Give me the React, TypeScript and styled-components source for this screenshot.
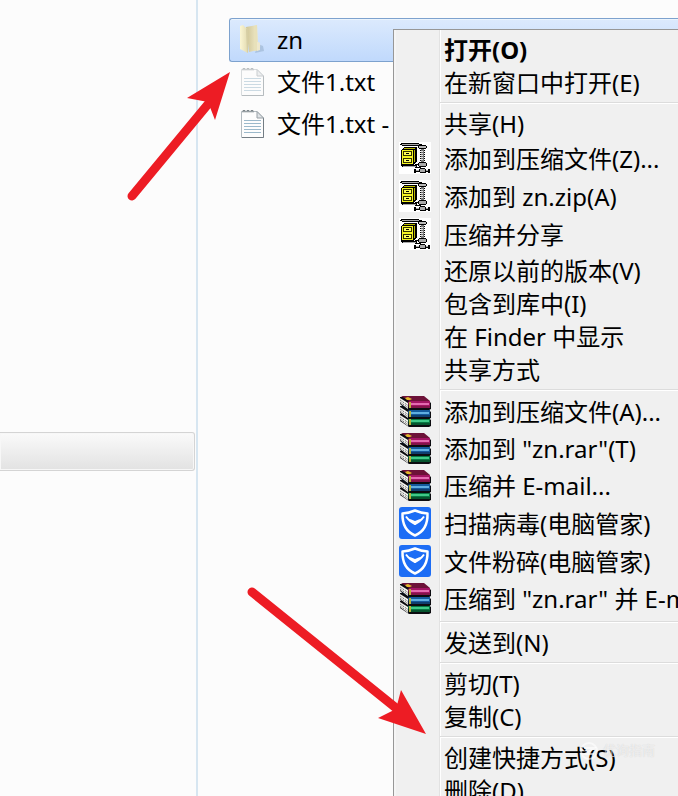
import React from 'react';
import styled, { createGlobalStyle, css } from 'styled-components';

const GlobalStyle = createGlobalStyle`
  * { box-sizing: border-box; }
  html, body { margin: 0; background: #fcfcfc; }
  body, button {
    font-family: "Noto Sans", "Noto Sans CJK SC", sans-serif;
    font-size: 24px;
    line-height: 33px;
    color: #000;
  }
`;

const Explorer = styled.div`
  position: relative;
  display: flex;
  height: 100vh;
  min-height: 480px;
  overflow: hidden;
`;

const Sidebar = styled.nav`
  flex: 0 0 198px;
  display: flex;
  flex-direction: column;
  padding: 432px 1px 0 0;
  border-right: 2px solid #d7e6f1;
`;

const SidebarItem = styled.button`
  height: 39px;
  border: 1px solid #d4d4d4;
  border-left: 0;
  border-radius: 0 3px 3px 0;
  background: linear-gradient(#fafafa, #e2e2e2);
  box-shadow: inset 0 0 0 1px #f7f7f7;
`;

const FileList = styled.ul`
  flex: 1;
  min-width: 0;
  margin: 0;
  padding: 18px 0 0 31px;
  list-style: none;
`;

const FileRow = styled.li<{ $selected?: boolean }>`
  display: flex;
  align-items: center;
  gap: 8px;
  height: 42px;
  padding: 0 0 4px 8px;
  white-space: nowrap;
  border: 1px solid transparent;
  border-right: 0;
  ${p => p.$selected && css`
    height: 44px;
    padding-bottom: 2px;
    border-color: #7da2ce;
    border-radius: 3px 0 0 3px;
    background: linear-gradient(#dceafd, #c0d9fc);
    box-shadow: inset 0 1px 0 #ebf4fd;
  `}
`;

const FileIcon = styled.svg`
  flex: none;
  width: 31px;
  height: 32px;
`;

const Menu = styled.div`
  position: absolute;
  top: 29px;
  left: 393px;
  right: -60px;
  padding: 3px 0;
  border: 1px solid #979797;
  background: linear-gradient(90deg, #f5f5f5 2px, #f0f0f0 2px 45px, #e2e2e2 45px 46px, #fff 46px 47px, #f0f0f0 47px);
`;

const MenuItem = styled.button<{ $size: number; $bold?: boolean }>`
  display: grid;
  grid-template-columns: 32px 1fr;
  column-gap: 13px;
  align-items: center;
  width: 100%;
  height: ${p => p.$size}px;
  padding: 0 0 2px 5px;
  border: 0;
  background: transparent;
  text-align: left;
  white-space: nowrap;
  font-weight: ${p => (p.$bold ? 700 : 400)};
`;

const Separator = styled.hr`
  height: 2px;
  margin: 3px 0 3px 46px;
  border: 0;
  border-top: 1px solid #dcdcdc;
  background: #fff;
`;

const MenuIcon = styled.svg`
  display: block;
  width: 32px;
  height: 32px;
`;

const Annotations = styled.svg`
  position: absolute;
  top: 0;
  left: 0;
  width: 678px;
  height: 796px;
  pointer-events: none;
`;

const Watermark = styled.div`
  position: absolute;
  top: 737px;
  left: 579px;
  display: flex;
  gap: 4px;
  align-items: center;
  font-size: 13px;
  line-height: 27px;
  color: rgba(255, 255, 255, 0.6);
  text-shadow: 0 0 1px rgba(120, 120, 120, 0.3);
  pointer-events: none;
`;

const Folder = () => (
  <FileIcon viewBox="0 0 31 32" aria-hidden="true">
    <defs>
      <linearGradient id="flap"><stop offset="0" stopColor="#fbf6d4" /><stop offset="1" stopColor="#e2dab0" /></linearGradient>
      <linearGradient id="back"><stop offset="0" stopColor="#cfc596" /><stop offset="1" stopColor="#f1ebca" /></linearGradient>
    </defs>
    <path d="M20 21l5 2 1 5-9 2z" fill="#9fb8d4" opacity=".7" />
    <path d="M8 4l11-2 1 25-9 2z" fill="url(#back)" />
    <path d="M16 3l3-1 1 25-3 1z" fill="#e8e1ba" />
    <path d="M2 3l3-1 4 4 1 24-8-4z" fill="url(#flap)" />
    <path d="M8 6l2-1v24l-1 1z" fill="#d6cea4" />
    <path d="M20 19c3 0 2 3 2 8l-3 1V19z" fill="#eee8cd" />
  </FileIcon>
);

const TextFile = ({ dim = false }: { dim?: boolean }) => (
  <FileIcon viewBox="1 0 31 32" opacity={dim ? 0.5 : 1} aria-hidden="true">
    <path d="M4.500 4.500H20L26.500 11V30.500H4.500z" fill="#fdfdfd" stroke="#b3bbc0" />
    <path d="M26.500 11V30.500H5" fill="none" stroke="#737d84" />
    <path d="M20 4.500V11h6.500z" fill="#dfe3e6" stroke="#98a0a6" />
    <path d="M7 13.500h17M7 16.500h17M7 19.500h17M7 22.500h17M7 25.500h17" stroke="#9bb9cb" />
    <path d="M6 5.500v-2h2v2M10 5.500v-2h2v2M14 5.500v-2h2v2" fill="none" stroke="#7c8589" />
  </FileIcon>
);

const ZipIcon = () => (
  <MenuIcon viewBox="0 0 32 32" shapeRendering="crispEdges" aria-hidden="true">
    <path d="M0 0h32v32H0z" fill="#fff" />
    <path d="M2 1h18v1h3v1h2v1H15V4H3V3H1V2h1z" fill="#000" />
    <path d="M3 2h17v1H3z" fill="#aaa" />
    <path d="M2 23h13l2-1h2v1h-1v2h4v1h-6v-1H3v-1H2z" fill="#000" />
    <path d="M4 24h13v1H4z" fill="#aaa" />
    <path d="M2 8l3-3h13v14l-3 4H2z" fill="#000" />
    <path d="M3 8h11v14H3z" fill="#f5f522" />
    <path d="M5 6h11v1H4zM15 8l1-1v12l-1 1z" fill="#b9b900" />
    <path d="M4 9h9v5H4zM4 16h9v5H4z" fill="#333300" />
    <path d="M5 10h7v3H5zM5 17h7v3H5z" fill="#ffff55" />
    <path d="M7 11h3v1H7zM7 18h3v1H7z" fill="#000" />
    <path d="M20 3h7v1h1v2h-1v1h-7V6h-1V4h1z" fill="#000" />
    <path d="M20 4h7v2h-7z" fill="#bbb" />
    <path d="M21 8h5v1h-5zM21 10h5v1h-5zM21 12h5v1h-5zM21 14h5v1h-5zM21 16h5v1h-5zM21 18h5v1h-5z" fill="#000" />
    <path d="M22 7h3v13h-3z" fill="#777" />
    <path d="M22 9h2v1h-2zM22 11h2v1h-2zM22 13h2v1h-2zM22 15h2v1h-2zM22 17h2v1h-2z" fill="#ddd" />
    <path d="M20 20h7v1h1v3h-1v1h-7v-1h-1v-3h1z" fill="#000" />
    <path d="M20 21h7v3h-7z" fill="#aaa" />
    <path d="M15 27h2v1h3v-1h1v-1h5v1h1v1h2v-1h2v4h-2v-1h-2v1h-6v-1h-4v1h-2z" fill="#000" />
    <path d="M21 27h5v3h-5zM17 28h3v1h-3zM27 28h2v1h-2z" fill="#aaa" />
  </MenuIcon>
);

const books = [
  { y: 0, cover: '#6d1238', spine: '#a31563', light: '#e46bb0' },
  { y: 9, cover: '#0b2c50', spine: '#145a9c', light: '#5faee0' },
  { y: 17, cover: '#053a22', spine: '#077a43', light: '#40c988' },
];

const RarIcon = () => (
  <MenuIcon viewBox="0 0 32 32" aria-hidden="true">
    {[...books].reverse().map(b => (
      <g key={b.y} transform={`translate(0 ${b.y})`}>
        <path d="M1 1H25L32 7V13L30 14H10L1 8z" fill="#0c0c10" />
        <path d="M1 2L9 7V13L1 7z" fill="#f4f4f0" />
        <path d="M1 4L9 9.500M1 6L9 11.500" stroke="#777" strokeDasharray="2 1" />
        <path d="M2 0H25L31 5H10z" fill={b.cover} />
        <path d="M9 6Q10 5 12 5H31V12H10z" fill={b.spine} />
        <path d="M12 7H30V9H12z" fill={b.light} />
        <path d="M12 10H31V12H11z" fill={b.cover} opacity=".6" />
        <path d="M10 6h2v6h-2z" fill="#b9b23c" />
      </g>
    ))}
    <path d="M6 2l3-1 4 2-2 1h-3z" fill="#e3b72c" />
  </MenuIcon>
);

const ShieldIcon = () => (
  <MenuIcon viewBox="0 0 32 32" aria-hidden="true">
    <rect width="32" height="32" rx="3" fill="#1d6df5" />
    <path d="M3.500 6.500Q10 6 16 3.500Q22 6 28.500 6.500Q29 23 16 28.500Q3 23 3.500 6.500z" fill="none" stroke="#fff" strokeWidth="2.500" strokeLinejoin="round" />
    <path d="M7 9.500Q11 15 16 17Q21 15 25 9.500" fill="none" stroke="#fff" strokeWidth="2" />
    <path d="M9 11.500Q12 12 16 14Q20 12 23 11.500L16 18z" fill="#fff" />
  </MenuIcon>
);

const icons = { zip: ZipIcon, rar: RarIcon, shield: ShieldIcon };

type Entry = { label: string; icon?: keyof typeof icons; bold?: boolean };

const groups: Entry[][] = [
  [{ label: '打开(O)', bold: true }, { label: '在新窗口中打开(E)' }],
  [
    { label: '共享(H)' },
    { label: '添加到压缩文件(Z)...', icon: 'zip' },
    { label: '添加到 zn.zip(A)', icon: 'zip' },
    { label: '压缩并分享', icon: 'zip' },
    { label: '还原以前的版本(V)' },
    { label: '包含到库中(I)' },
    { label: '在 Finder 中显示' },
    { label: '共享方式' },
  ],
  [
    { label: '添加到压缩文件(A)...', icon: 'rar' },
    { label: '添加到 "zn.rar"(T)', icon: 'rar' },
    { label: '压缩并 E-mail...', icon: 'rar' },
    { label: '扫描病毒(电脑管家)', icon: 'shield' },
    { label: '文件粉碎(电脑管家)', icon: 'shield' },
    { label: '压缩到 "zn.rar" 并 E-mail', icon: 'rar' },
  ],
  [{ label: '发送到(N)' }],
  [{ label: '剪切(T)' }, { label: '复制(C)' }],
  [{ label: '创建快捷方式(S)' }, { label: '删除(D)' }],
];

const rowSize = (icon?: Entry['icon']) => (!icon ? 33 : icon === 'rar' ? 37 : 38);

export default function App() {
  return (
    <>
      <GlobalStyle />
      <Explorer>
        <Sidebar><SidebarItem aria-label="选中的位置" /></Sidebar>
        <FileList>
          <FileRow $selected><Folder />zn</FileRow>
          <FileRow><TextFile dim />文件1.txt</FileRow>
          <FileRow><TextFile />文件1.txt - 副本</FileRow>
        </FileList>
        <Menu role="menu">
          {groups.map((group, g) => (
            <React.Fragment key={g}>
              {g > 0 && <Separator />}
              {group.map(({ label, icon, bold }) => {
                const Icon = icon && icons[icon];
                return (
                  <MenuItem key={label} role="menuitem" $size={rowSize(icon)} $bold={bold}>
                    {Icon ? <Icon /> : <span />}
                    <span>{label}</span>
                  </MenuItem>
                );
              })}
            </React.Fragment>
          ))}
        </Menu>
        <Annotations viewBox="0 0 678 796" aria-hidden="true">
          <g stroke="#ed1c24" strokeWidth="9" strokeLinecap="round" fill="#ed1c24">
            <path d="M132 196L209 103" />
            <path d="M252 592L396 708" />
          </g>
          <path d="M230 72L215 120L208 102L187 98z" fill="#ed1c24" />
          <path d="M426 734L378 718L396 709L401 690z" fill="#ed1c24" />
        </Annotations>
        <Watermark>
          <svg width="20" height="20" viewBox="0 0 20 20" fill="none" stroke="currentColor" strokeWidth="2" aria-hidden="true">
            <circle cx="10" cy="10" r="8" /><path d="M5 7h10l-9 6h9" />
          </svg>
          优询指南
        </Watermark>
      </Explorer>
    </>
  );
}
